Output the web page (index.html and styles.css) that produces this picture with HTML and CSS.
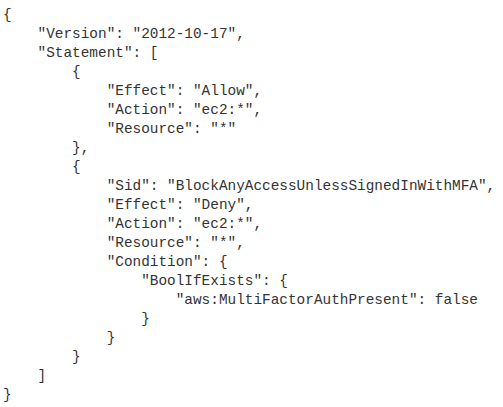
FILE: index.html
```html
<!DOCTYPE html>
<html>
<head>
<meta charset="utf-8">
<link rel="stylesheet" href="styles.css">
</head>
<body>
<pre class="code">{
    "Version": "2012-10-17",
    "Statement": [
        {
            "Effect": "Allow",
            "Action": "ec2:*",
            "Resource": "*"
        },
        {
            "Sid": "BlockAnyAccessUnlessSignedInWithMFA",
            "Effect": "Deny",
            "Action": "ec2:*",
            "Resource": "*",
            "Condition": {
                "BoolIfExists": {
                    "aws:MultiFactorAuthPresent": false
                }
            }
        }
    ]
}</pre>
</body>
</html>
```
FILE: styles.css
```css
html, body {
  margin: 0;
  background: #ffffff;
}
body {
  padding: 6px 0 0 3px;
}
.code {
  margin: 0;
  font-family: "Liberation Mono", "Courier New", monospace;
  font-size: 14.4px;
  line-height: 19px;
  color: #333333;
  white-space: pre;
}
```
